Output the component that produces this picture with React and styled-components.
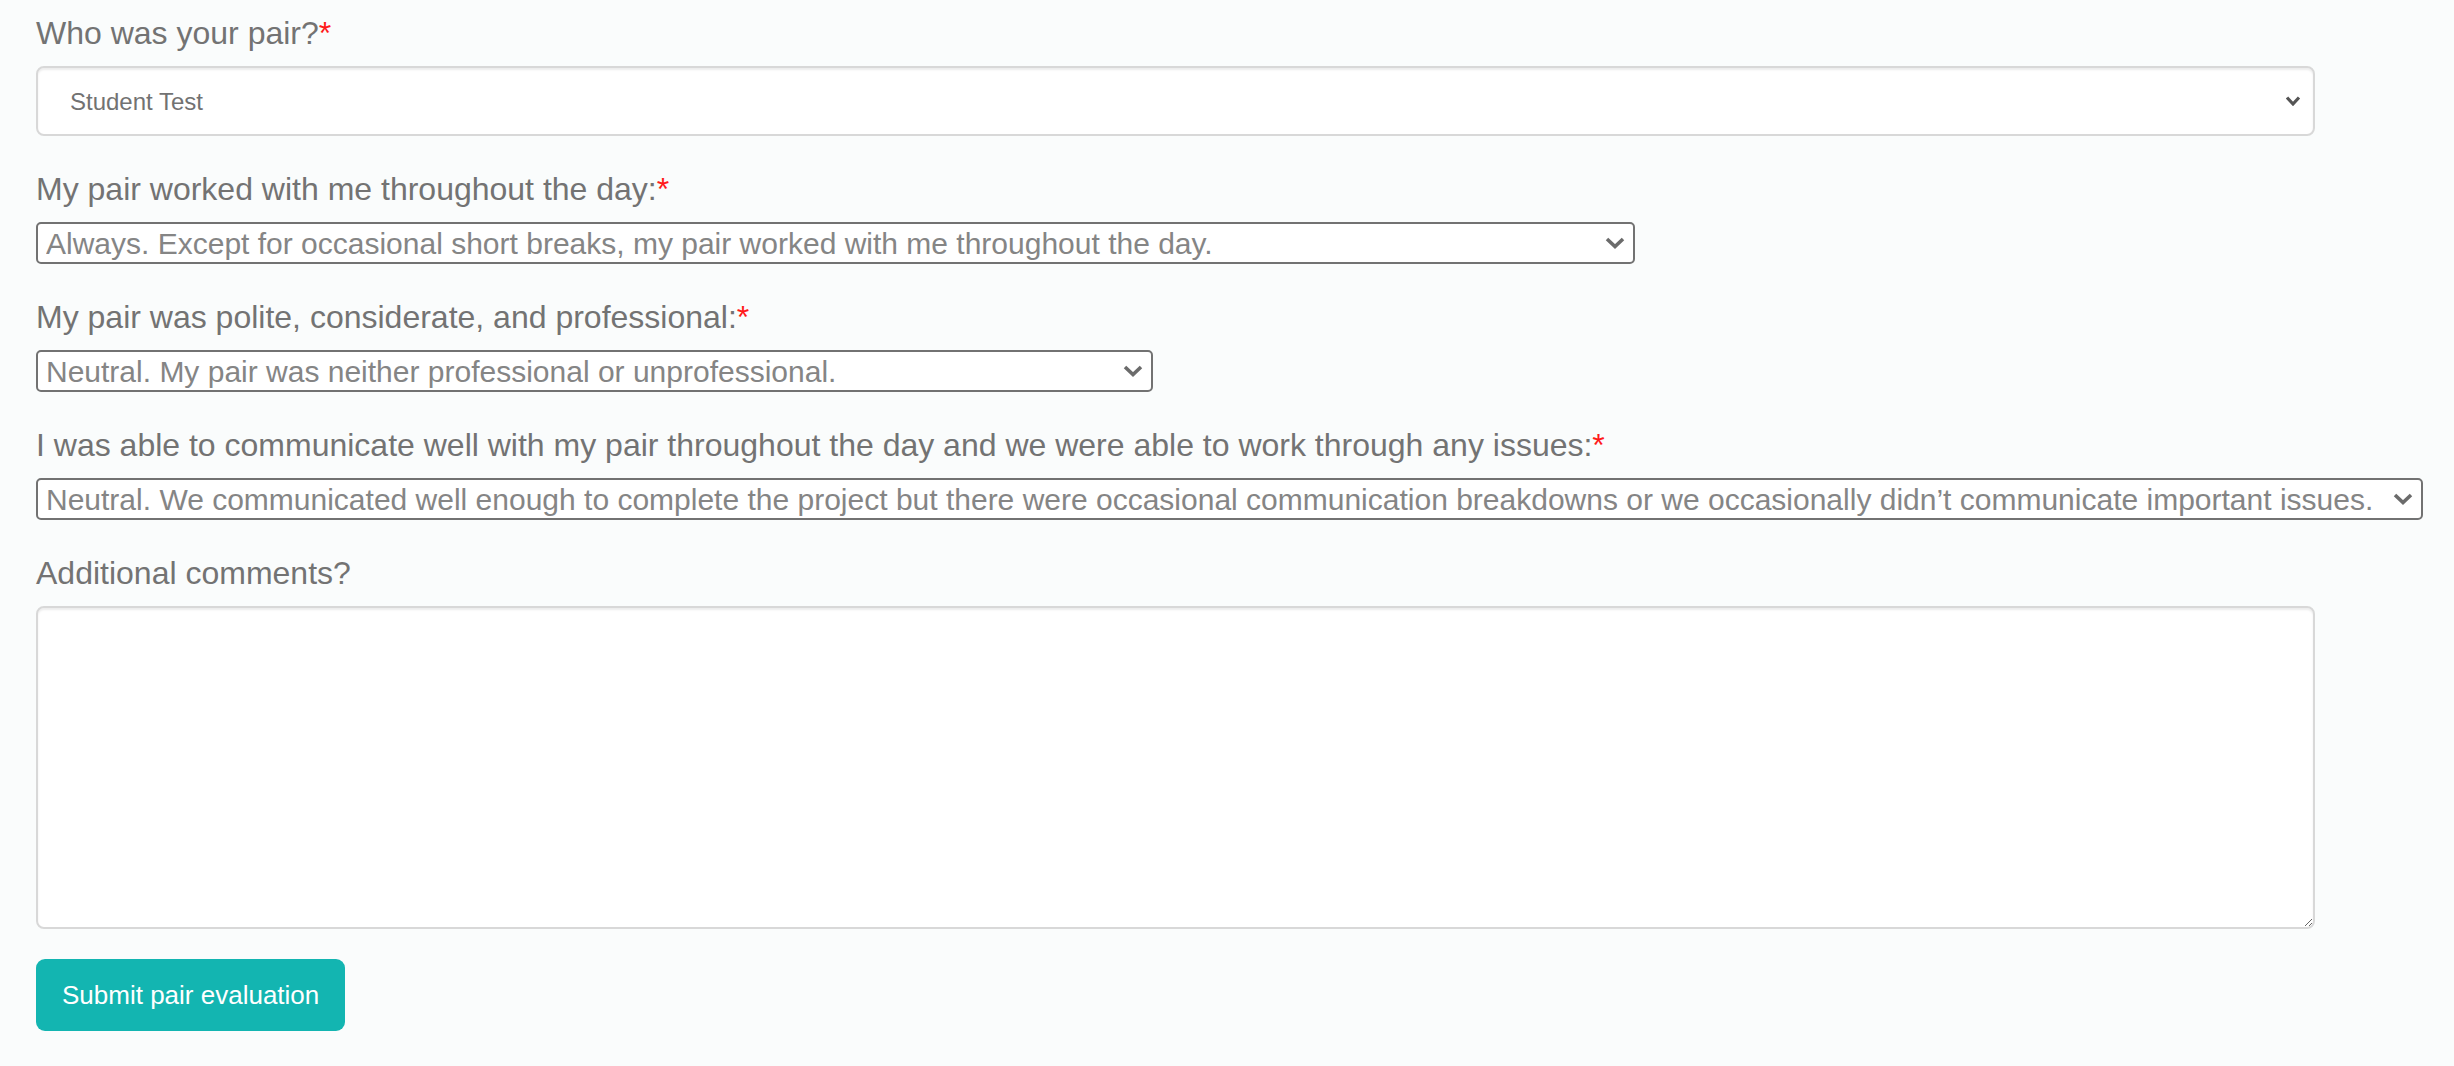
import React from "react";
import styled, { createGlobalStyle } from "styled-components";

const GlobalStyle = createGlobalStyle`
  body {
    margin: 0;
    background-color: #fafcfc;
    font-family: "Liberation Sans", Arial, sans-serif;
  }
`;

const EvalForm = styled.form`
  display: flex;
  flex-direction: column;
  align-items: flex-start;
  padding: 10px 36px 36px 36px;
`;

const FormGroup = styled.div`
  display: flex;
  flex-direction: column;
  align-items: flex-start;
  width: 100%;
  margin-bottom: 30px;
`;

const FormLabel = styled.label`
  font-size: 32px;
  line-height: 46px;
  color: #737373;
  margin-bottom: 10px;
`;

const Required = styled.span`
  color: #ff1a1a;
`;

const SelectWrap = styled.div`
  position: relative;
  width: ${(p) => p.width}px;
`;

const Select = styled.select`
  appearance: none;
  -webkit-appearance: none;
  display: block;
  width: 100%;
  margin: 0;
  font-family: "Liberation Sans", Arial, sans-serif;
  color: ${(p) => (p.control ? "#727272" : "#858585")};
  background-color: #fff;
  ${(p) =>
    p.control
      ? `
    height: 70px;
    padding: 0 60px 0 32px;
    font-size: 24px;
    border: 2px solid #d8d8d8;
    border-radius: 8px;
    box-shadow: inset 0 2px 2px rgba(0, 0, 0, 0.075);
  `
      : `
    height: 42px;
    padding: 0 40px 0 8px;
    font-size: 30px;
    border: 2px solid #727272;
    border-radius: 5px;
  `}
`;

const Chevron = styled.svg`
  position: absolute;
  top: 50%;
  right: ${(p) => (p.control ? 14 : 10)}px;
  transform: translateY(-50%);
  pointer-events: none;
`;

const TextArea = styled.textarea`
  display: block;
  box-sizing: border-box;
  width: 2279px;
  height: 323px;
  margin: 0;
  padding: 12px 24px;
  font-family: "Liberation Sans", Arial, sans-serif;
  font-size: 28px;
  color: #555;
  background-color: #fff;
  border: 2px solid #d8d8d8;
  border-radius: 8px;
  box-shadow: inset 0 2px 2px rgba(0, 0, 0, 0.075);
  resize: vertical;
`;

const SubmitButton = styled.button`
  height: 72px;
  padding: 0 26px;
  font-family: "Liberation Sans", Arial, sans-serif;
  font-size: 26px;
  color: #fff;
  background-color: #13b5b1;
  border: none;
  border-radius: 9px;
  cursor: pointer;
`;

function Dropdown({ width, control, value, options }) {
  return (
    <SelectWrap width={width}>
      <Select control={control ? 1 : 0} defaultValue={value}>
        {options.map((o) => (
          <option key={o}>{o}</option>
        ))}
      </Select>
      {control ? (
        <Chevron control={1} width="16" height="11" viewBox="0 0 16 11">
          <path d="M2 2 L8 8.5 L14 2" fill="none" stroke="#555" strokeWidth="3.2" />
        </Chevron>
      ) : (
        <Chevron width="20" height="12" viewBox="0 0 20 12">
          <path d="M2 2 L10 9.5 L18 2" fill="none" stroke="#6b6b6b" strokeWidth="3.6" />
        </Chevron>
      )}
    </SelectWrap>
  );
}

const questions = [
  {
    label: "My pair worked with me throughout the day:",
    width: 1599,
    value: "Always. Except for occasional short breaks, my pair worked with me throughout the day.",
  },
  {
    label: "My pair was polite, considerate, and professional:",
    width: 1117,
    value: "Neutral. My pair was neither professional or unprofessional.",
  },
  {
    label:
      "I was able to communicate well with my pair throughout the day and we were able to work through any issues:",
    width: 2387,
    value:
      "Neutral. We communicated well enough to complete the project but there were occasional communication breakdowns or we occasionally didn’t communicate important issues.",
  },
];

export default function App() {
  return (
    <>
      <GlobalStyle />
      <EvalForm onSubmit={(e) => e.preventDefault()}>
        <FormGroup>
          <FormLabel>
            Who was your pair?<Required>*</Required>
          </FormLabel>
          <Dropdown width={2279} control value="Student Test" options={["Student Test"]} />
        </FormGroup>

        {questions.map((q) => (
          <FormGroup key={q.label}>
            <FormLabel>
              {q.label}
              <Required>*</Required>
            </FormLabel>
            <Dropdown width={q.width} value={q.value} options={[q.value]} />
          </FormGroup>
        ))}

        <FormGroup>
          <FormLabel>Additional comments?</FormLabel>
          <TextArea />
        </FormGroup>

        <SubmitButton type="submit">Submit pair evaluation</SubmitButton>
      </EvalForm>
    </>
  );
}
